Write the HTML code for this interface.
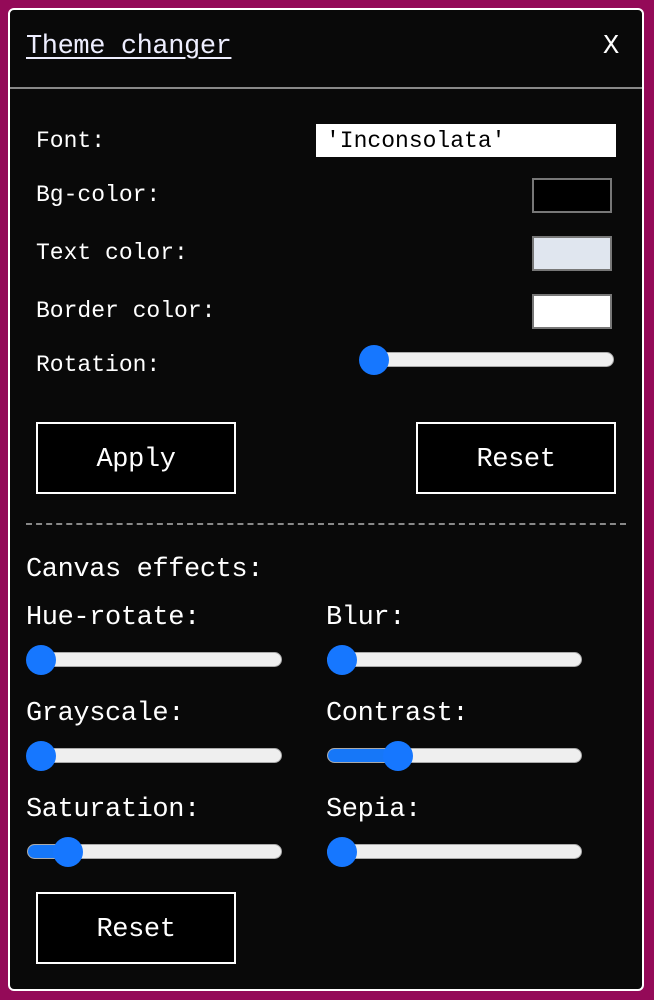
<!DOCTYPE html>
<html><head><style>
body{margin:0;width:654px;height:1000px;background:#940a58;position:relative;overflow:hidden;font-family:"Liberation Mono","DejaVu Sans Mono",monospace;color:#fff}
.p{position:absolute;left:8px;top:8px;width:632px;height:979px;background:#090909;border:2px solid #fff;border-radius:6px}
.t{position:absolute;white-space:nowrap;line-height:1}
.s{font-size:23px;letter-spacing:0}
.l{font-size:27px;letter-spacing:-0.4px}
.tr{position:absolute;height:13px;background:#efefef;border:1px solid #aaa;border-radius:8px;overflow:hidden}
.tr i{position:absolute;left:0;top:0;bottom:0;background:#1677f8}
.th{position:absolute;width:30px;height:30px;border-radius:50%;background:#1677ff}
.b{position:absolute;width:196px;height:68px;background:#000;border:2px solid #fff;font-size:27px;letter-spacing:-0.4px;text-align:center;line-height:72px}
.sw{position:absolute;left:532px;width:76px;height:31px;border:2px solid #777}
</style></head><body>
<div class="p"></div>
<div class="t l" style="left:26px;top:34px;text-decoration:underline;text-underline-offset:4px;color:#eef">Theme changer</div>
<div class="t l" style="left:603px;top:34px">X</div>
<div style="position:absolute;left:10px;top:87px;width:632px;height:2px;background:#888"></div>
<div class="t s" style="left:36px;top:130px">Font:</div>
<div style="position:absolute;left:316px;top:124px;width:300px;height:33px;background:#fff;color:#000;font-size:23px;line-height:35px;box-sizing:border-box;padding-left:10px">'Inconsolata'</div>
<div class="t s" style="left:36px;top:184px">Bg-color:</div>
<div class="sw" style="top:178px;background:#000"></div>
<div class="t s" style="left:36px;top:242px">Text color:</div>
<div class="sw" style="top:236px;background:#e0e6ef"></div>
<div class="t s" style="left:36px;top:300px">Border color:</div>
<div class="sw" style="top:294px;background:#fff"></div>
<div class="t s" style="left:36px;top:354px">Rotation:</div>
<div class="tr" style="left:360px;top:352px;width:252px"></div><div class="th" style="left:359px;top:345px"></div>
<div class="b" style="left:36px;top:422px">Apply</div>
<div class="b" style="left:416px;top:422px">Reset</div>
<div style="position:absolute;left:26px;top:523px;width:600px;border-top:2px dashed #888"></div>
<div class="t l" style="left:26px;top:557px">Canvas effects:</div>
<div class="t l" style="left:26px;top:605px">Hue-rotate:</div>
<div class="t l" style="left:326px;top:605px">Blur:</div>
<div class="tr" style="left:27px;top:652px;width:253px"></div><div class="th" style="left:26px;top:645px"></div>
<div class="tr" style="left:327px;top:652px;width:253px"></div><div class="th" style="left:327px;top:645px"></div>
<div class="t l" style="left:26px;top:701px">Grayscale:</div>
<div class="t l" style="left:326px;top:701px">Contrast:</div>
<div class="tr" style="left:27px;top:748px;width:253px"></div><div class="th" style="left:26px;top:741px"></div>
<div class="tr" style="left:327px;top:748px;width:253px"><i style="width:70px"></i></div><div class="th" style="left:383px;top:741px"></div>
<div class="t l" style="left:26px;top:797px">Saturation:</div>
<div class="t l" style="left:326px;top:797px">Sepia:</div>
<div class="tr" style="left:27px;top:844px;width:253px"><i style="width:40px"></i></div><div class="th" style="left:53px;top:837px"></div>
<div class="tr" style="left:327px;top:844px;width:253px"></div><div class="th" style="left:327px;top:837px"></div>
<div class="b" style="left:36px;top:892px">Reset</div>
</body></html>
